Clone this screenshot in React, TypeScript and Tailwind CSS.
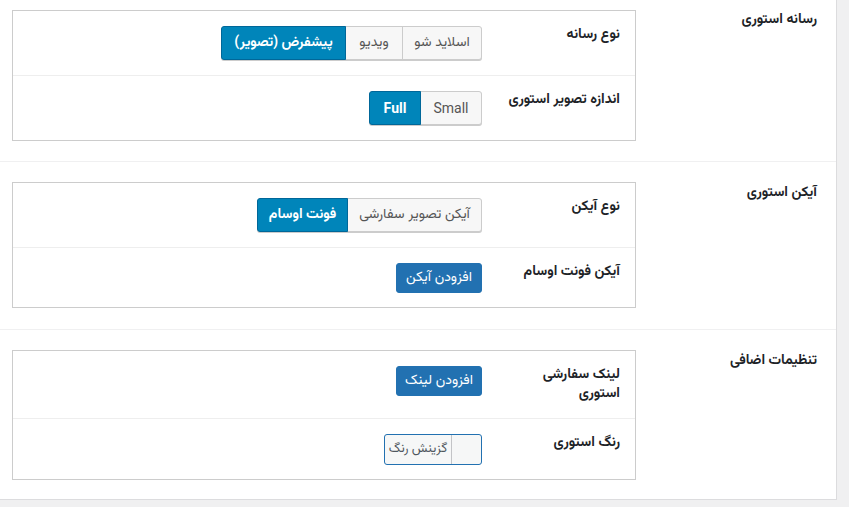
import React from "react";

const fa = "font-['Vazirmatn','Noto_Sans_Arabic','DejaVu_Sans',sans-serif]";

type Seg = { label: string; width: string; active?: boolean; latin?: boolean };

function Segmented({ items }: { items: Seg[] }) {
  return (
    <div className="flex">
      {items.map((s, i) => (
        <button
          key={i}
          className={[
            "relative h-[34px] border text-[14px] leading-none flex items-center justify-center shadow-[0_1px_0_#ccc]",
            s.width,
            i > 0 ? "-ms-px" : "",
            i === 0 ? "rounded-s-[3px]" : "",
            i === items.length - 1 ? "rounded-e-[3px]" : "",
            s.active
              ? "z-10 bg-[#0085ba] border-[#006799] text-white font-bold shadow-[0_1px_0_#006799]"
              : "bg-[#f7f7f7] border-[#cccccc] text-[#555555]",
            s.latin ? "font-['Roboto',sans-serif]" : "",
          ].join(" ")}
        >
          {s.label}
        </button>
      ))}
    </div>
  );
}

function BlueButton({ children }: { children: React.ReactNode }) {
  return (
    <button className="w-[86px] h-[30px] rounded-[3px] bg-[#2271b1] border border-[#2271b1] text-white text-[14px] flex items-center justify-center">
      {children}
    </button>
  );
}

function ColorPicker() {
  return (
    <div className="flex w-[98px] h-[31px] rounded-[3px] border border-[#2271b1] bg-[#f6f7f7] overflow-hidden">
      <div className="w-[30px] border-e border-[#c3c4c7]" />
      <div className="flex-1 flex items-center justify-center text-[13px] text-[#50575e]">گزینش رنگ</div>
    </div>
  );
}

function Row({
  label,
  children,
  last,
  pb = "pb-[15px]",
}: {
  label: React.ReactNode;
  children: React.ReactNode;
  last?: boolean;
  pb?: string;
}) {
  return (
    <div className={`flex pt-[15px] ${pb} ${last ? "" : "border-b border-[#eeeeee]"}`}>
      <div className="w-[145px] shrink-0 pr-[15px] pl-[10px] text-[14px] leading-[19px] font-bold text-[#1d2327]">
        {label}
      </div>
      <div className="flex-1 pr-[8px]">{children}</div>
    </div>
  );
}

function Section({
  title,
  children,
  first,
  last,
}: {
  title: string;
  children: React.ReactNode;
  first?: boolean;
  last?: boolean;
}) {
  const pad = first ? "pt-[10px] pb-[20px]" : last ? "pt-[20px] pb-[19px]" : "pt-[20px] pb-[21px]";
  return (
    <section className={`flex ${last ? "" : "border-b border-[#f0f0f1]"}`}>
      <div
        className={`w-[200px] shrink-0 pr-[19px] text-[14px] leading-[19px] font-bold text-[#1d2327] ${
          first ? "pt-[11px]" : "pt-[22px]"
        }`}
      >
        {title}
      </div>
      <div className={`flex-1 pl-[12px] ${pad}`}>
        <div className="border border-[#cccccc] bg-white">{children}</div>
      </div>
    </section>
  );
}

export default function App() {
  return (
    <div className="min-h-screen bg-[#f0f0f1]">
      <div dir="rtl" className={`w-[837px] bg-white border-r border-b border-[#dcdcde] ${fa}`}>
        <Section title="رسانه استوری" first>
          <Row label="نوع رسانه">
            <Segmented
              items={[
                { label: "اسلاید شو", width: "w-[80px]" },
                { label: "ویدیو", width: "w-[58px]" },
                { label: "پیشفرض (تصویر)", width: "w-[125px]", active: true },
              ]}
            />
          </Row>
          <Row label="اندازه تصویر استوری" last>
            <Segmented
              items={[
                { label: "Small", width: "w-[62px]", latin: true },
                { label: "Full", width: "w-[52px]", active: true, latin: true },
              ]}
            />
          </Row>
        </Section>

        <Section title="آیکن استوری">
          <Row label="نوع آیکن">
            <Segmented
              items={[
                { label: "آیکن تصویر سفارشی", width: "w-[135px]" },
                { label: "فونت اوسام", width: "w-[91px]", active: true },
              ]}
            />
          </Row>
          <Row label="آیکن فونت اوسام" last pb="pb-[14px]">
            <BlueButton>افزودن آیکن</BlueButton>
          </Row>
        </Section>

        <Section title="تنظیمات اضافی" last>
          <Row label="لینک سفارشی استوری" pb="pb-[14px]">
            <BlueButton>افزودن لینک</BlueButton>
          </Row>
          <Row label="رنگ استوری" last pb="pb-[14px]">
            <ColorPicker />
          </Row>
        </Section>
      </div>
    </div>
  );
}
